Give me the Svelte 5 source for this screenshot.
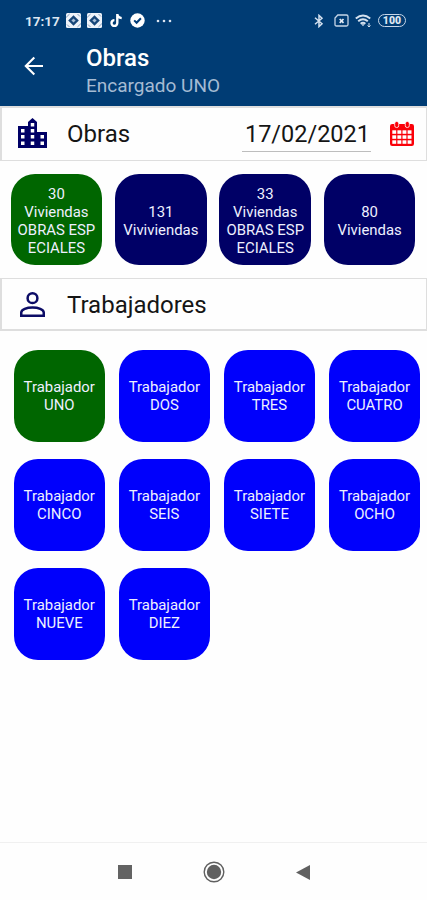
<script lang="ts">
  type Tile = { lines: string[]; active?: boolean };

  const date = '17/02/2021';

  let works: Tile[] = [
    { lines: ['30', 'Viviendas', 'OBRAS ESP', 'ECIALES'], active: true },
    { lines: ['131', 'Viviviendas'] },
    { lines: ['33', 'Viviendas', 'OBRAS ESP', 'ECIALES'] },
    { lines: ['80', 'Viviendas'] },
  ];

  let workers: Tile[] = [
    'UNO', 'DOS', 'TRES', 'CUATRO', 'CINCO', 'SEIS', 'SIETE', 'OCHO', 'NUEVE', 'DIEZ',
  ].map((name, i) => ({ lines: ['Trabajador', name], active: i === 0 }));
</script>

<div class="screen">
  <header>
    <div class="status">
      <span class="time">17:17</span>
      {#each [0, 1] as _}
        <svg class="app-icon" width="15" height="15" viewBox="0 0 15 15">
          <rect width="15" height="15" rx="1.5" fill="#eef3fa" />
          <path d="M7.5 2.2 12.8 7.5 7.5 12.8 2.2 7.5z" fill="#174679" />
          <path d="M7.5 5.4 9.6 7.5 7.5 9.6 5.4 7.5z" fill="#a9bfd8" />
          <path d="M0 4.5 3.6 1M15 10.5 11.4 14M11.5 1 14 3.5M1 11.5 3.5 14" stroke="#6988ad" stroke-width=".8" />
        </svg>
      {/each}
      <svg class="tiktok" width="13" height="15" viewBox="0 0 13 15">
        <path d="M7.3 1v9a2.9 2.9 0 1 1-2.9-2.9M7.3 1.2c.3 2.4 1.8 3.7 4.4 3.9" fill="none" stroke="#fff" stroke-width="2.4" />
      </svg>
      <svg class="check" width="15" height="15" viewBox="0 0 15 15">
        <circle cx="7.5" cy="7.5" r="7.2" fill="#fff" />
        <path d="m4.2 7.4 2.4 2.4 4.3-4.5" fill="none" stroke="#003c78" stroke-width="2" />
      </svg>
      <svg class="dots" width="16" height="4" viewBox="0 0 16 4" fill="#dbe5f1">
        <circle cx="2" cy="2" r="1.3" /><circle cx="8" cy="2" r="1.3" /><circle cx="14" cy="2" r="1.3" />
      </svg>
      <span class="spacer"></span>
      <svg class="bluetooth" width="10" height="14" viewBox="0 0 10 14">
        <path d="m1 3.8 7 6L5 12.6V1.4l3 2.8-7 6" fill="none" stroke="#d4e1ef" stroke-width="1.5" />
      </svg>
      <svg class="sim" width="15" height="13" viewBox="0 0 15 13">
        <path d="M3.8 1h8.7Q14 1 14 2.5v8q0 1.5-1.5 1.5h-10Q1 12 1 10.5V4z" fill="none" stroke="#c6d6e8" stroke-width="1.3" />
        <path d="m5.7 5 3.8 3.8M9.5 5 5.7 8.8" stroke="#e3ecf6" stroke-width="1.7" />
      </svg>
      <svg class="wifi" width="17" height="14" viewBox="0 0 17 14" fill="none" stroke="#d4e1ef" stroke-width="1.9">
        <path d="M.8 4.5q7.2-6.2 14.4 0M3.2 7.2q4.8-4 9.6 0M5.6 9.8q2.4-1.9 4.8 0" />
        <path d="m6.3 10.3 1.7 2 1.7-2z" fill="#d4e1ef" stroke="none" />
        <path d="M14 9v4M12.5 11.5 14 13l1.5-1.5" stroke-width="1" />
      </svg>
      <span class="battery">100</span>
    </div>
    <div class="bar">
      <svg class="back" width="20" height="20" viewBox="0 0 20 20">
        <path d="M19 10H2M10.3 1.5 1.8 10l8.5 8.5" fill="none" stroke="#fff" stroke-width="2.1" />
      </svg>
      <div>
        <h1>Obras</h1>
        <p>Encargado UNO</p>
      </div>
    </div>
  </header>

  <section class="heading">
    <svg class="city" width="29" height="30" viewBox="0 0 29 30">
      <path
        fill="#000066"
        fill-rule="evenodd"
        d="M0 8h10V4l4.5-4L19 4v10h10v16H0zM3 11v3.500h3.500V11zM3 17v3.500h3.500V17zM3 23.500V27h3.500v-3.500zM12.750 5v3.500h3.500V5zM12.750 11v3.500h3.500V11zM12.750 17v3.500h3.500V17zM12.750 23.500V27h3.500v-3.500zM22.500 17v3.500H26V17zM22.500 23.500V27H26v-3.500z"
      />
    </svg>
    <h2>Obras</h2>
    <span class="date">{date}</span>
    <svg class="calendar" width="24" height="25" viewBox="0 0 24 25">
      <rect y="3" width="24" height="22" rx="2.2" fill="#fa0008" />
      <rect x="4.7" y=".5" width="4" height="6" rx="1.8" fill="#fa0008" stroke="#fff" stroke-width=".8" />
      <rect x="15.3" y=".5" width="4" height="6" rx="1.8" fill="#fa0008" stroke="#fff" stroke-width=".8" />
      <g fill="#fff">
        {#each [9.3, 14.3, 19.3] as y}
          {#each [2.3, 7.4, 12.5, 17.6] as x}
            <rect {x} {y} width="3.9" height="3.5" />
          {/each}
        {/each}
      </g>
    </svg>
  </section>

  <div class="tiles works">
    {#each works as tile}
      <button class:active={tile.active}>
        {#each tile.lines as line}<span>{line}</span>{/each}
      </button>
    {/each}
  </div>

  <section class="heading staff">
    <svg class="person" width="25" height="25" viewBox="0 0 25 25" fill="none" stroke="#0c0c66" stroke-width="2.5">
      <circle cx="12.5" cy="6.2" r="4.9" />
      <path d="M1.25 23.75v-3.2c0-3.2 5.5-5 11.25-5s11.25 1.8 11.25 5v3.2z" />
    </svg>
    <h2>Trabajadores</h2>
  </section>

  <div class="tiles workers">
    {#each workers as tile}
      <button class:active={tile.active}>
        {#each tile.lines as line}<span>{line}</span>{/each}
      </button>
    {/each}
  </div>

  <nav>
    <svg width="14" height="14" viewBox="0 0 14 14"><rect width="14" height="14" fill="#636363" /></svg>
    <svg width="22" height="22" viewBox="0 0 22 22">
      <circle cx="11" cy="11" r="9.8" fill="none" stroke="#606060" stroke-width="1.4" />
      <circle cx="11" cy="11" r="7.2" fill="#606060" />
    </svg>
    <svg width="14" height="15" viewBox="0 0 14 15"><path d="M14 0v15L0 7.5z" fill="#606060" /></svg>
  </nav>
</div>

<style>
  :global(body) {
    margin: 0;
    background: #fefefe;
  }

  .screen {
    display: flex;
    flex-direction: column;
    width: 427px;
    height: 900px;
    overflow: hidden;
    background: #fefefe;
    font-family: Roboto, sans-serif;
  }

  svg {
    display: block;
    flex: none;
  }

  h1,
  h2,
  p {
    margin: 0;
    font-weight: 400;
  }

  header {
    flex: none;
    height: 106px;
    background: #003c74;
    color: white;
  }

  .status {
    display: flex;
    align-items: center;
    height: 41px;
    padding: 0 21px 0 25px;
    box-sizing: border-box;
  }

  .time {
    width: 41px;
    font-size: 13.5px;
    font-weight: 700;
    color: #dce6f2;
  }

  .app-icon {
    margin-right: 6px;
  }

  .tiktok {
    margin-left: 2px;
  }

  .check {
    margin-left: 7px;
  }

  .dots {
    margin-left: 11px;
  }

  .spacer {
    flex: 1;
  }

  .sim {
    margin-left: 10px;
  }

  .wifi {
    margin: 0 6px 0 6px;
  }

  .battery {
    width: 28px;
    height: 13px;
    box-sizing: border-box;
    border: 1px solid #c6d6e8;
    border-radius: 7px;
    font-size: 10.5px;
    font-weight: 900;
    line-height: 12px;
    text-align: center;
    color: #dce6f2;
  }

  .bar {
    display: flex;
    padding: 3px 0 0 24px;
  }

  .back {
    margin: 12px 42px 0 0;
  }

  h1 {
    font-size: 24px;
    font-weight: 500;
    line-height: 28px;
  }

  p {
    font-size: 19px;
    line-height: 28px;
    color: #a5bbd3;
  }

  .heading {
    display: flex;
    flex: none;
    align-items: center;
    height: 55px;
    padding-left: 16px;
    box-sizing: border-box;
    border: 2px solid #dedede;
    border-width: 2px 1px 1px 2px;
    color: #151515;
  }

  .staff {
    height: 53px;
    padding-top: 2px;
    border-width: 1px 1px 2px 2px;
  }

  .heading h2 {
    font-size: 24px;
    line-height: 30px;
  }

  .city {
    margin: 0 20px 2px 0;
  }

  .person {
    margin: 0 22px 1px 2px;
  }

  .date {
    margin: 0 19px 0 auto;
    width: 129px;
    padding: 3px 1px 3px 0;
    box-sizing: border-box;
    border-bottom: 1px solid #bdbdbd;
    font-size: 23.5px;
    line-height: 28px;
    text-align: right;
  }

  .calendar {
    margin: 0 12px 1px 0;
  }

  .tiles {
    display: grid;
    flex: none;
  }

  .works {
    grid-template-columns: repeat(4, 91.5px);
    column-gap: 12.9px;
    padding: 12.5px 0 13px 10.7px;
  }

  .workers {
    grid-template-columns: repeat(4, 91.5px);
    gap: 17.5px 13.6px;
    padding: 19px 0 0 13.5px;
  }

  button {
    display: flex;
    flex-direction: column;
    align-items: center;
    justify-content: center;
    height: 91.5px;
    padding: 1px 0 0;
    box-sizing: border-box;
    border: none;
    border-radius: 24px;
    background: #0000fc;
    color: #eef0ff;
    font: 14.9px/18px Roboto, sans-serif;
    white-space: nowrap;
  }

  .works button {
    padding-top: 3px;
    background: #000066;
  }

  button.active,
  .works button.active {
    background: #006600;
  }

  nav {
    display: flex;
    flex: none;
    align-items: center;
    height: 58px;
    margin-top: auto;
    padding: 1px 0 0 118px;
    gap: 71px;
    box-sizing: border-box;
    border-top: 1px solid #f0f0f0;
  }
</style>
